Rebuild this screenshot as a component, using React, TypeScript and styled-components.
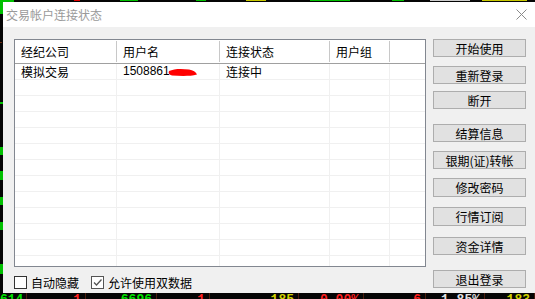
import React from "react";
import styled, { createGlobalStyle } from "styled-components";

const Global = createGlobalStyle`
  html, body { margin: 0; padding: 0; background: #000; }
  body { font-family: "Noto Sans CJK SC", "Noto Sans", sans-serif; font-size: 12px; }
`;

const Screen = styled.div`
  width: 535px;
  height: 299px;
  overflow: hidden;
  display: flex;
  flex-direction: column;
  background: #050505;
`;

const TopStrip = styled.svg`
  display: block;
  width: 535px;
  height: 2px;
  flex: none;
`;

const Middle = styled.div`
  display: flex;
  height: 291px;
  flex: none;
`;

const LeftStrip = styled.svg`
  display: block;
  width: 3px;
  height: 291px;
  flex: none;
`;

const Dialog = styled.div`
  width: 532px;
  height: 291px;
  display: flex;
  flex-direction: column;
  background: #f0f0f0;
`;

const TitleBar = styled.div`
  height: 25px;
  background: #fff;
  display: flex;
  align-items: center;
  justify-content: space-between;
  padding: 0 8px 0 3px;
  flex: none;
`;

const Title = styled.span`
  color: #9a9a9a;
  font-size: 12px;
  line-height: 14px;
  margin-top: 1px;
`;

const Body = styled.div`
  flex: 1;
  display: flex;
  padding: 12px 6px 0 11px;
  gap: 7px;
`;

const LeftCol = styled.div`
  display: flex;
  flex-direction: column;
  width: 412px;
`;

const List = styled.div`
  width: 412px;
  height: 228px;
  box-sizing: border-box;
  border: 1px solid #828790;
  background: #fff;
  overflow: hidden;
`;

const HeaderRow = styled.div`
  display: flex;
  height: 24px;
  box-sizing: border-box;
  border-bottom: 1px solid #a0a0a0;
`;

const HeaderCell = styled.div<{ $w: number }>`
  width: ${(p) => p.$w}px;
  flex: none;
  box-sizing: border-box;
  border-right: 1px solid #c8c8c8;
  padding-left: 6px;
  display: flex;
  align-items: center;
  color: #000;
  font-size: 12px;
  margin: 1px 0 1px;
`;

const HeaderFill = styled.div`
  flex: 1;
`;

const Row = styled.div`
  display: flex;
  height: 16px;
  box-sizing: border-box;
  border-bottom: 1px solid #f0f0f0;
`;

const Cell = styled.div<{ $w: number }>`
  width: ${(p) => p.$w}px;
  flex: none;
  box-sizing: border-box;
  border-right: 1px solid #f0f0f0;
  padding-left: 6px;
  display: flex;
  align-items: center;
  font-size: 12px;
  line-height: 15px;
  color: #000;
  white-space: nowrap;
`;

const Num = styled.span`
  font-family: "Liberation Sans", Arial, sans-serif;
  font-size: 12px;
`;

const Scribble = styled.svg`
  display: block;
  margin-left: -2px;
  margin-top: 2px;
`;

const Checks = styled.div`
  display: flex;
  align-items: center;
  height: 26px;
  margin-top: 2px;
  gap: 12px;
`;

const CheckLabel = styled.label`
  display: flex;
  align-items: center;
  gap: 4px;
  font-size: 12px;
  color: #000;
`;

const Box = styled.span<{ $dark?: boolean }>`
  width: 13px;
  height: 13px;
  box-sizing: border-box;
  border: 1px solid ${(p) => (p.$dark ? "#333" : "#555")};
  background: #fff;
  display: flex;
  align-items: center;
  justify-content: center;
`;

const RightCol = styled.div`
  display: flex;
  flex-direction: column;
  width: 93px;
`;

const Btn = styled.div<{ $mt: number; $h?: number }>`
  margin-top: ${(p) => p.$mt}px;
  height: ${(p) => p.$h ?? 18}px;
  box-sizing: border-box;
  border: 1px solid #adadad;
  background: #e1e1e1;
  display: flex;
  align-items: center;
  justify-content: center;
  font-size: 12px;
  color: #000;
  flex: none;
`;

const BottomStrip = styled.div`
  display: flex;
  height: 6px;
  overflow: hidden;
  flex: none;
  background: #050505;
`;

const Quote = styled.div<{ $w: number; $c: string }>`
  width: ${(p) => p.$w}px;
  flex: none;
  box-sizing: border-box;
  border-right: 1px solid #4a1c0c;
  text-align: right;
  padding-right: 4px;
  color: ${(p) => p.$c};
  font-family: "Liberation Mono", monospace;
  font-weight: bold;
  font-size: 13px;
  line-height: 12px;
  padding-top: 1px;
`;

const quotes: { w: number; c: string; t: string }[] = [
  { w: 27, c: "#00e000", t: "614" },
  { w: 59, c: "#ff2020", t: "1" },
  { w: 71, c: "#00e000", t: "6696" },
  { w: 53, c: "#ff2020", t: "1" },
  { w: 89, c: "#d0d000", t: "185" },
  { w: 65, c: "#ff2020", t: "0.00%" },
  { w: 62, c: "#ff2020", t: "6" },
  { w: 59, c: "#e0e0e0", t: "1.85%" },
  { w: 50, c: "#d0d000", t: "183" },
];

const cols = [102, 103, 110, 60];

const buttons: { t: string; mt: number; h?: number }[] = [
  { t: "开始使用", mt: 0 },
  { t: "重新登录", mt: 9 },
  { t: "断开", mt: 7 },
  { t: "结算信息", mt: 15 },
  { t: "银期(证)转帐", mt: 9 },
  { t: "修改密码", mt: 9, h: 19 },
  { t: "行情订阅", mt: 10, h: 19 },
  { t: "资金详情", mt: 11 },
  { t: "退出登录", mt: 15 },
];

export default function App() {
  const emptyRows = Array.from({ length: 12 });
  return (
    <>
      <Global />
      <Screen>
        <TopStrip viewBox="0 0 535 2">
          <rect x="0" y="0" width="14" height="2" fill="#00c000" />
          <rect x="74" y="0" width="6" height="1" fill="#e00000" />
          <rect x="120" y="0" width="18" height="1" fill="#00c000" />
          <rect x="196" y="0" width="10" height="1" fill="#00c000" />
          <rect x="246" y="0" width="20" height="1" fill="#c8c800" />
          <rect x="310" y="0" width="40" height="1" fill="#00c000" />
          <rect x="392" y="0" width="12" height="1" fill="#00c000" />
          <rect x="430" y="0" width="40" height="1" fill="#cccccc" />
          <rect x="482" y="0" width="45" height="1" fill="#c8c800" />
        </TopStrip>
        <Middle>
          <LeftStrip viewBox="0 0 3 291">
            <rect x="0" y="0" width="3" height="12" fill="#00c000" />
            <rect x="0" y="40" width="2" height="1" fill="#6a2a10" />
            <rect x="0" y="100" width="3" height="2" fill="#00c000" />
            <rect x="0" y="145" width="3" height="8" fill="#00c000" />
            <rect x="0" y="169" width="3" height="9" fill="#00c000" />
            <rect x="0" y="195" width="3" height="8" fill="#00c000" />
            <rect x="0" y="220" width="3" height="8" fill="#00c000" />
            <rect x="0" y="262" width="3" height="10" fill="#00c000" />
          </LeftStrip>
          <Dialog>
            <TitleBar>
              <Title>交易帐户连接状态</Title>
              <svg width="11" height="11" viewBox="0 0 11 11">
                <path d="M0.5 0.5 L10.5 10.5 M10.5 0.5 L0.5 10.5" stroke="#8a8a8a" strokeWidth="1" />
              </svg>
            </TitleBar>
            <Body>
              <LeftCol>
                <List>
                  <HeaderRow>
                    <HeaderCell $w={cols[0]}>经纪公司</HeaderCell>
                    <HeaderCell $w={cols[1]}>用户名</HeaderCell>
                    <HeaderCell $w={cols[2]}>连接状态</HeaderCell>
                    <HeaderCell $w={cols[3]}>用户组</HeaderCell>
                    <HeaderFill />
                  </HeaderRow>
                  <Row>
                    <Cell $w={cols[0]}>模拟交易</Cell>
                    <Cell $w={cols[1]}>
                      <Num>1508861</Num>
                      <Scribble width="30" height="9" viewBox="0 0 30 9">
                        <path d="M1 3 C6 0.5, 14 0.5, 21 1.5 C25 2, 28 4, 29 6.5 C22 8.5, 12 8, 4 7.5 C1 7, 0 5, 1 3 Z" fill="#ff0000" />
                      </Scribble>
                    </Cell>
                    <Cell $w={cols[2]}>连接中</Cell>
                    <Cell $w={cols[3]} />
                  </Row>
                  {emptyRows.map((_, i) => (
                    <Row key={i}>
                      <Cell $w={cols[0]} />
                      <Cell $w={cols[1]} />
                      <Cell $w={cols[2]} />
                      <Cell $w={cols[3]} />
                    </Row>
                  ))}
                </List>
                <Checks>
                  <CheckLabel>
                    <Box $dark />
                    自动隐藏
                  </CheckLabel>
                  <CheckLabel>
                    <Box>
                      <svg width="11" height="11" viewBox="0 0 11 11">
                        <path d="M2 5.5 L4.5 8 L9.5 2.5" fill="none" stroke="#555" strokeWidth="1.3" />
                      </svg>
                    </Box>
                    允许使用双数据
                  </CheckLabel>
                </Checks>
              </LeftCol>
              <RightCol>
                {buttons.map((b) => (
                  <Btn key={b.t} $mt={b.mt} $h={b.h}>
                    {b.t}
                  </Btn>
                ))}
              </RightCol>
            </Body>
          </Dialog>
        </Middle>
        <BottomStrip>
          {quotes.map((q, i) => (
            <Quote key={i} $w={q.w} $c={q.c}>
              {q.t}
            </Quote>
          ))}
        </BottomStrip>
      </Screen>
    </>
  );
}
